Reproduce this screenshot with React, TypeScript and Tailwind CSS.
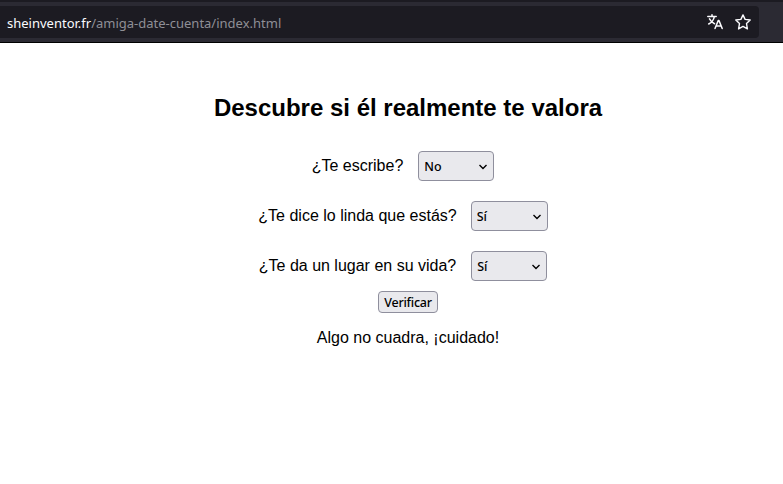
import { useState } from "react";

const UI_FONT = "font-['Noto_Sans',sans-serif]";

function AddressBar() {
  return (
    <header className="h-[43px] border-b border-black bg-[#2b2a33]">
      <div className="h-[2px] bg-[#1c1b22]" />
      <div className="pt-1 pr-6">
        <div className="flex h-8 items-center rounded-r bg-[#1c1b22] pl-[7px] pr-2">
          <div className={`${UI_FONT} flex-1 whitespace-nowrap pt-0.5 text-[13px] leading-5 text-[#8f8f96]`}>
            <span className="text-[#fbfbfe]">sheinventor.fr</span>/amiga-date-cuenta/index.html
          </div>
          <svg className="mr-3 h-4 w-4" viewBox="0 0 16 16" fill="none" stroke="#fbfbfe" strokeWidth="1.5" strokeLinecap="round" strokeLinejoin="round">
            <path d="M.8 2.500h8.400M5 .8v1.700M2.500 4.800c1.200 2.300 2.800 3.900 5 4.900M7.300 2.800C6.600 6 4.600 8.500 1.700 10M8 14.500l3.200-7.900h.8l3.200 7.900M9.200 12h5" />
          </svg>
          <svg className="h-4 w-4" viewBox="0 0 16 16" fill="none" stroke="#fbfbfe" strokeWidth="1.4" strokeLinejoin="round">
            <path d="M8 .9l2.100 4.500 5.100.6-3.700 3.500.9 5.400L8 12.400l-4.400 2.500.9-5.400L.8 6l5.100-.6z" />
          </svg>
        </div>
      </div>
    </header>
  );
}

type QuestionProps = { label: string; initial: string; width: string; gap: string };

function Question({ label, initial, width, gap }: QuestionProps) {
  const [value, setValue] = useState(initial);
  return (
    <label className="flex h-[30px] items-center justify-center">
      <span className="whitespace-nowrap">{label}</span>
      <span className={`${UI_FONT} ${width} ${gap} relative mr-2.5 flex h-[30px] items-center`}>
        <select
          value={value}
          onChange={(e) => setValue(e.target.value)}
          className="h-full w-full appearance-none rounded border border-[#8f8f9d] bg-[#e9e9ed] pt-0.5 pl-[5px] text-[12.5px] font-medium text-black"
        >
          <option>Sí</option>
          <option>No</option>
        </select>
        <svg className="pointer-events-none absolute top-[13px] right-[7px] h-[6px] w-[8px]" viewBox="0 0 8 6" fill="none" stroke="black" strokeWidth="1.400">
          <path d="M.5 1L4 4.500 7.500 1" />
        </svg>
      </span>
    </label>
  );
}

export default function App() {
  return (
    <div className="h-screen overflow-hidden bg-white font-['Liberation_Sans',Arial,sans-serif] text-base text-black">
      <AddressBar />
      <main className="pl-[33px] pt-[51px] text-center">
        <h1 className="text-2xl leading-[28px] font-bold">Descubre si él realmente te valora</h1>
        <form className="mt-[29px]" onSubmit={(e) => e.preventDefault()}>
          <div className="flex flex-col gap-5">
            <Question label="¿Te escribe?" initial="No" width="w-[76px]" gap="ml-[15px]" />
            <Question label="¿Te dice lo linda que estás?" initial="Sí" width="w-[77px]" gap="ml-[14px]" />
            <Question label="¿Te da un lugar en su vida?" initial="Sí" width="w-[76px]" gap="ml-[15px]" />
          </div>
          <button className={`${UI_FONT} mx-auto mt-2.5 block h-[22px] w-[60px] rounded border border-[#8f8f9d] bg-[#e9e9ed] pt-px text-[12.5px] leading-[19px] font-medium tracking-[-0.25px]`}>
            Verificar
          </button>
        </form>
        <p className="mt-4 leading-[18px]">Algo no cuadra, ¡cuidado!</p>
      </main>
    </div>
  );
}
